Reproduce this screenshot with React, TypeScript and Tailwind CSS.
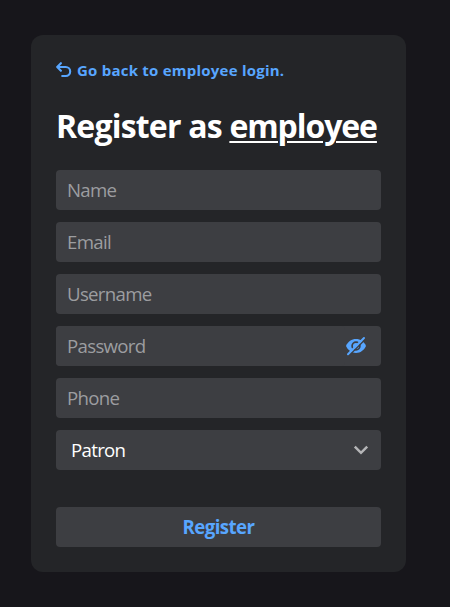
const field =
  "block h-10 w-full rounded bg-[#3d3e42] px-[11px] pb-[2px] text-[18.67px] tracking-[-0.7px] text-white placeholder:text-[#9c9da0] outline-none";

function HiddenEye() {
  return (
    <svg viewBox="0 0 22 20" className="h-5 w-[22px] shrink-0" fill="none" strokeLinecap="round">
      <path d="M1 10C3 5.600 6.600 3.100 11 3.100S19 5.600 21 10C19 14.400 15.400 16.900 11 16.900S3 14.400 1 10Z" fill="#58a6ff" />
      <circle cx="11" cy="10" r="3.900" stroke="#3d3e42" strokeWidth="1.700" />
      <path d="M4.300 19.300 20.300 3.200" stroke="#3d3e42" strokeWidth="1.500" />
      <path d="M3 18.200 19 2" stroke="#58a6ff" strokeWidth="2" />
    </svg>
  );
}

export default function App() {
  return (
    <main className="h-[607px] bg-[#17161b] pl-[31px] pt-[35px] font-['Open_Sans','Noto_Sans',sans-serif]">
      <section className="h-[537px] w-[375px] rounded-xl bg-[#242528] px-[25px] pt-[23px]">
        <a href="#" className="flex h-6 items-center text-[#58a6ff]">
          <svg viewBox="0 0 16 16" className="mr-[5px] h-4 w-4 shrink-0" fill="none" stroke="currentColor" strokeWidth="2.1" strokeLinecap="round" strokeLinejoin="round">
            <path d="M4.900 1.200 1.200 5l3.700 3.800M1.400 5h8.300a4.500 4.500 0 0 1 0 9H6.200" />
          </svg>
          <span className="whitespace-nowrap text-[15px] font-bold leading-6 tracking-[0.23px]">
            Go back to employee login.
          </span>
        </a>
        <h1 className="mt-[20px] h-12 whitespace-nowrap text-[32px] font-bold leading-[48px] tracking-[-0.8px] text-white">
          Register as <span className="tracking-[-1.08px] underline decoration-2 underline-offset-[3px]">employee</span>
        </h1>
        <form className="mt-[20px] flex flex-col gap-3">
          <input className={field} placeholder="Name" />
          <input className={field} placeholder="Email" />
          <input className={field} placeholder="Username" />
          <div className="flex h-10 items-center rounded bg-[#3d3e42] pr-[14px]">
            <input className={field} placeholder="Password" />
            <HiddenEye />
          </div>
          <input className={field} placeholder="Phone" />
          <button type="button" className="flex h-10 items-center justify-between rounded bg-[#3d3e42] pl-[15px] pr-[12px] text-[18.67px] tracking-[-0.7px] text-white">
            <span>Patron</span>
            <svg viewBox="0 0 16 16" className="h-4 w-4 text-[#b5b5b7]" fill="none" stroke="currentColor" strokeWidth="2.5">
              <path d="m1.8 4.6 6.2 6.2 6.2-6.2" />
            </svg>
          </button>
          <button type="button" className="mt-[25px] h-10 rounded bg-[#3d3e42] text-[18.67px] font-bold tracking-[-0.55px] text-[#58a6ff]">
            Register
          </button>
        </form>
      </section>
    </main>
  );
}
